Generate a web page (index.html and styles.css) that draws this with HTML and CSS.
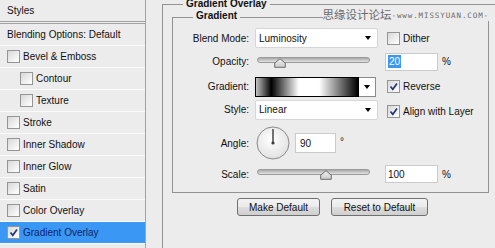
FILE: index.html
```html
<!DOCTYPE html>
<html>
<head>
<meta charset="utf-8">
<link rel="stylesheet" href="styles.css">
</head>
<body>
<div class="dialog">
  <aside class="styles">
    <div class="hdr">Styles</div>
    <div class="row">Blending Options: Default</div>
    <div class="row"><span class="cb"></span>Bevel &amp; Emboss</div>
    <div class="row sub"><span class="cb"></span>Contour</div>
    <div class="row sub"><span class="cb"></span>Texture</div>
    <div class="row"><span class="cb"></span>Stroke</div>
    <div class="row"><span class="cb"></span>Inner Shadow</div>
    <div class="row"><span class="cb"></span>Inner Glow</div>
    <div class="row"><span class="cb"></span>Satin</div>
    <div class="row"><span class="cb"></span>Color Overlay</div>
    <div class="row sel"><span class="cb"><svg viewBox="0 0 11 11" width="11" height="11"><path d="M2.5 5.5 L4.8 8.3 L9 2.5" fill="none" stroke="#22367a" stroke-width="1.7"/></svg></span>Gradient Overlay</div>
    <div class="row"></div>
  </aside>
  <main class="main">
    <div class="group outer">
      <span class="legend">Gradient Overlay</span>
      <div class="group inner">
        <span class="legend">Gradient</span>
        <span class="mark"><span class="cn">思缘设计论坛</span><span class="en">-www.MISSYUAN.COM-</span></span>
        <div class="form">
          <span class="lbl">Blend Mode:</span>
          <div class="select"><span>Luminosity</span><span class="arrow"></span></div>
          <label class="check"><span class="cb"></span>Dither</label>

          <span class="lbl">Opacity:</span>
          <div class="slider"><div class="track"></div><svg class="thumb" style="left:20%" viewBox="0 0 12 10" width="12" height="10"><defs><linearGradient id="tg" x1="0" y1="0" x2="0" y2="1"><stop offset="0" stop-color="#f4f4f4"/><stop offset="1" stop-color="#c9c9c9"/></linearGradient></defs><path d="M6 0.7 L11.3 5.2 L11.3 9.3 L0.7 9.3 L0.7 5.2 Z" fill="url(#tg)" stroke="#6d6d6d"/></svg></div>
          <div class="numrow"><span class="num"><span class="hl">20</span></span><span class="unit">%</span></div>

          <span class="lbl">Gradient:</span>
          <div class="gpick"><span class="swatch"></span><span class="gbtn"><span class="arrow"></span></span></div>
          <label class="check"><span class="cb"><svg viewBox="0 0 11 11" width="11" height="11"><path d="M2.5 5.5 L4.8 8.3 L9 2.5" fill="none" stroke="#22367a" stroke-width="1.7"/></svg></span>Reverse</label>

          <span class="lbl">Style:</span>
          <div class="select"><span>Linear</span><span class="arrow"></span></div>
          <label class="check low"><span class="cb"><svg viewBox="0 0 11 11" width="11" height="11"><path d="M2.5 5.5 L4.8 8.3 L9 2.5" fill="none" stroke="#22367a" stroke-width="1.7"/></svg></span>Align with Layer</label>

          <span class="lbl">Angle:</span>
          <div class="angle">
            <svg class="dial" viewBox="0 0 34 34" width="34" height="34"><defs><radialGradient id="dg" cx="0.45" cy="0.4" r="0.6"><stop offset="0" stop-color="#ffffff"/><stop offset="1" stop-color="#e2e2e2"/></radialGradient></defs><circle cx="17" cy="17" r="16" fill="url(#dg)" stroke="#8a8a8a"/><line x1="17" y1="17" x2="17" y2="3" stroke="#3a3a3a" stroke-width="1.4"/><circle cx="17" cy="17" r="1.6" fill="#3a3a3a"/></svg>
            <span class="num ang">90</span><span class="deg">°</span>
          </div>
          <span></span>

          <span class="lbl">Scale:</span>
          <div class="slider"><div class="track"></div><svg class="thumb" style="left:61%" viewBox="0 0 12 10" width="12" height="10"><path d="M6 0.7 L11.3 5.2 L11.3 9.3 L0.7 9.3 L0.7 5.2 Z" fill="url(#tg)" stroke="#6d6d6d"/></svg></div>
          <div class="numrow"><span class="num">100</span><span class="unit">%</span></div>
        </div>
      </div>
      <div class="buttons">
        <button class="btn make">Make Default</button>
        <button class="btn reset">Reset to Default</button>
      </div>
    </div>
  </main>
</div>
</body>
</html>
```

FILE: styles.css
```css
* { box-sizing: border-box; }
body {
  margin: 0;
  background: #ececec;
  font: 10px "Liberation Sans", Arial, sans-serif;
  color: #111;
  overflow: hidden;
}
.dialog {
  display: flex;
  width: 495px;
  height: 248px;
  overflow: hidden;
}
.styles {
  width: 146px;
  flex: none;
  border-right: 1px solid #a3a3a3;
}
.hdr {
  height: 24px;
  border-bottom: 3px double #a3a3a3;
  padding-left: 7px;
  line-height: 21px;
}
.row {
  height: 22px;
  border-bottom: 1px solid #fbfbfb;
  display: flex;
  align-items: center;
  gap: 3px;
  padding-left: 7px;
}
.row.sub { padding-left: 20px; }
.row.sel { background: #3a97f3; color: #0c2466; }
.cb {
  width: 13px;
  height: 13px;
  flex: none;
  border: 1px solid #959595;
  background: linear-gradient(135deg, #d8d8d8, #fafafa 85%);
  display: inline-flex;
  align-items: center;
  justify-content: center;
}
.main {
  flex: 1;
  min-width: 0;
  padding-left: 16px;
}
.group {
  position: relative;
  border: 1px solid #929292;
}
.outer {
  margin-top: 4px;
  margin-right: -30px;
  height: 260px;
  border-bottom: none;
}
.legend {
  position: absolute;
  top: -8px;
  left: 20px;
  padding: 0 3px;
  background: #ececec;
  font-weight: bold;
  line-height: 12px;
  color: #111;
  white-space: nowrap;
}
.outer > .legend { top: -7px; }
.inner {
  margin: 12px 0 0 9px;
  width: 317px;
  height: 176px;
  padding-top: 9px;
}
.mark {
  position: absolute;
  top: -11px;
  right: -1px;
  display: flex;
  align-items: center;
  height: 14px;
  background: #ececec;
  color: #6a6a6a;
  white-space: nowrap;
}
.mark .cn {
  font: 11.5px "Noto Sans CJK SC", sans-serif;
  line-height: 14px;
}
.mark .en {
  font: 7.5px "DejaVu Sans Mono", monospace;
  letter-spacing: 0.9px;
  margin-top: 3px;
}
.form {
  display: grid;
  grid-template-columns: 82px 132px auto;
  grid-template-rows: 22px 25px 25px 21px 46px 16px;
  align-items: center;
}
.lbl {
  text-align: right;
  padding-right: 6px;
}
.select {
  width: 123px;
  height: 20px;
  background: #fff;
  border: 1px solid #d6d6d6;
  border-radius: 2px;
  display: flex;
  align-items: center;
  justify-content: space-between;
  padding: 0 6px 0 3px;
}
.arrow {
  width: 0;
  height: 0;
  border-left: 3.5px solid transparent;
  border-right: 3.5px solid transparent;
  border-top: 4px solid #000;
}
.check {
  display: flex;
  align-items: center;
  gap: 3px;
}
.check.low { margin-top: 3px; }
.slider {
  position: relative;
  width: 113px;
  height: 12px;
  margin-left: 2px;
}
.track {
  position: absolute;
  top: 1px;
  left: 0;
  right: 0;
  height: 6px;
  border: 1px solid #9b9b9b;
  border-radius: 3px;
  background: linear-gradient(#a8a8a8, #e3e3e3);
}
.thumb {
  position: absolute;
  top: 2px;
  transform: translateX(-50%);
}
.numrow {
  display: flex;
  align-items: center;
  margin-left: -2px;
}
.num {
  display: flex;
  align-items: center;
  width: 53px;
  height: 18px;
  background: #fff;
  border: 1px solid #cbcbcb;
  padding-left: 2px;
}
.hl {
  background: #3a97f3;
  color: #fff;
  padding: 0 1px;
  line-height: 13px;
}
.unit { margin-left: 4px; }
.gpick {
  display: flex;
  height: 20px;
}
.swatch {
  width: 104px;
  height: 20px;
  border: 1px solid #000;
  background: linear-gradient(to right, #c4c4c4 0%, #000 15%, #fff 42%, #fff 62%, #000 100%);
}
.gbtn {
  width: 17px;
  height: 20px;
  border: 1px solid #8a8a8a;
  border-left: none;
  background: #fff;
  display: flex;
  align-items: center;
  justify-content: center;
}
.angle {
  display: flex;
  align-items: center;
  margin-left: 1px;
}
.dial { flex: none; }
.ang {
  width: 41px;
  height: 20px;
  margin-left: 5px;
  padding-left: 4px;
}
.deg { margin-left: 4px; margin-top: -4px; }
.buttons {
  display: flex;
  justify-content: center;
  gap: 11px;
  width: 317px;
  margin: 5px 0 0 9px;
  padding-left: 4px;
}
.btn {
  height: 18px;
  padding: 0;
  border: 1px solid #707070;
  border-radius: 3px;
  background: linear-gradient(#f3f3f3 0%, #ebebeb 48%, #dddddd 52%, #cfcfcf 100%);
  font: 10px "Liberation Sans", Arial, sans-serif;
  color: #111;
}
.make { width: 83px; }
.reset { width: 97px; }
```
